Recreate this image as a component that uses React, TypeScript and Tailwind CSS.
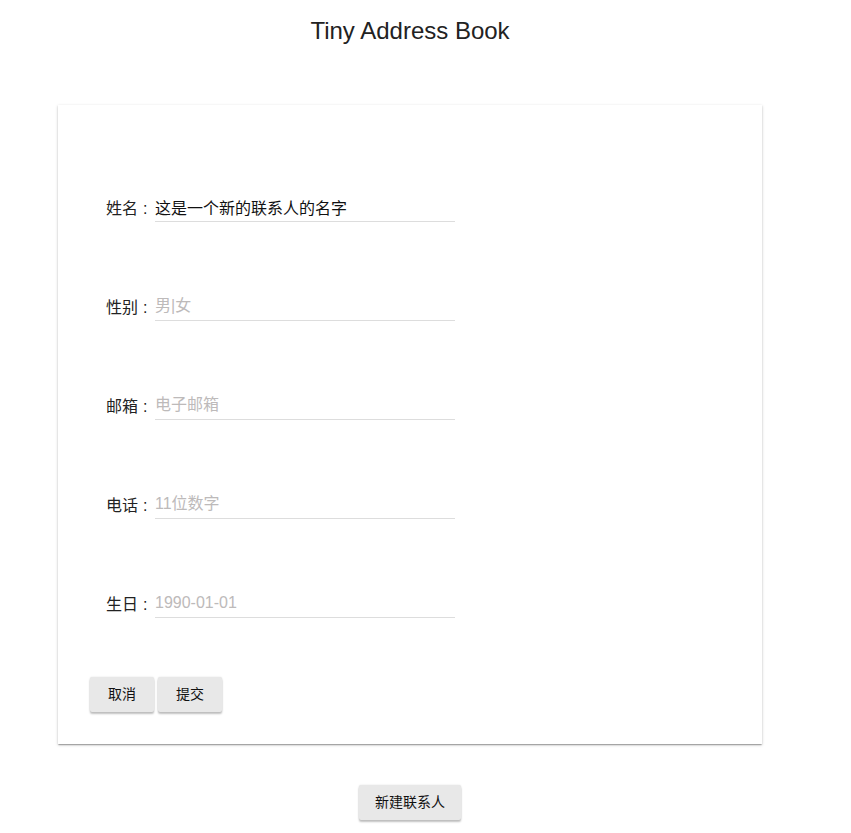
import React from 'react';

const fields = [
  { label: '姓名', value: '这是一个新的联系人的名字', placeholder: '' },
  { label: '性别', value: '', placeholder: '男|女' },
  { label: '邮箱', value: '', placeholder: '电子邮箱' },
  { label: '电话', value: '', placeholder: '11位数字' },
  { label: '生日', value: '', placeholder: '1990-01-01' },
];

const font = "font-['Liberation_Sans','Noto_Sans_CJK_SC',sans-serif]";

function Button({ children }: { children: React.ReactNode }) {
  return (
    <button
      className="h-[35px] min-w-[64px] px-4 rounded-[2px] bg-[#e8e8e8] text-[14px] text-[#111] shadow-[0_2px_2px_rgba(0,0,0,0.24),0_0_2px_rgba(0,0,0,0.12)]"
    >
      {children}
    </button>
  );
}

export default function App() {
  return (
    <div className={`w-[820px] bg-white text-[#222] ${font}`}>
      <h1 className="pt-[15px] text-center text-[24px] leading-[32px]">Tiny Address Book</h1>

      {/* Form card */}
      <div className="mt-[58px] mx-auto w-[704px] bg-white px-8 pt-[90px] pb-8 shadow-[0_1px_3px_rgba(0,0,0,0.2),0_1px_1px_rgba(0,0,0,0.14),0_2px_1px_-1px_rgba(0,0,0,0.14)]">
        <div className="flex flex-col gap-[72px] pl-4">
          {fields.map((f) => (
            <div key={f.label} className="flex items-end h-[27px]">
              <span className="flex text-[16px] leading-[22px] pb-[2px]">
                <span className="w-[32px]">{f.label}</span>
                <span className="w-[17px] pl-[5px]">:</span>
              </span>
              <input
                readOnly
                defaultValue={f.value}
                placeholder={f.placeholder}
                className="w-[300px] h-[27px] border-b border-[#ddd] text-[16px] leading-[22px] pb-[2px] outline-none placeholder:text-[#bdbaba] text-[#111]"
              />
            </div>
          ))}
        </div>
        <div className="mt-[59px] flex gap-1">
          <Button>取消</Button>
          <Button>提交</Button>
        </div>
      </div>

      <div className="mt-[41px] flex justify-center pb-4">
        <Button>新建联系人</Button>
      </div>
    </div>
  );
}
